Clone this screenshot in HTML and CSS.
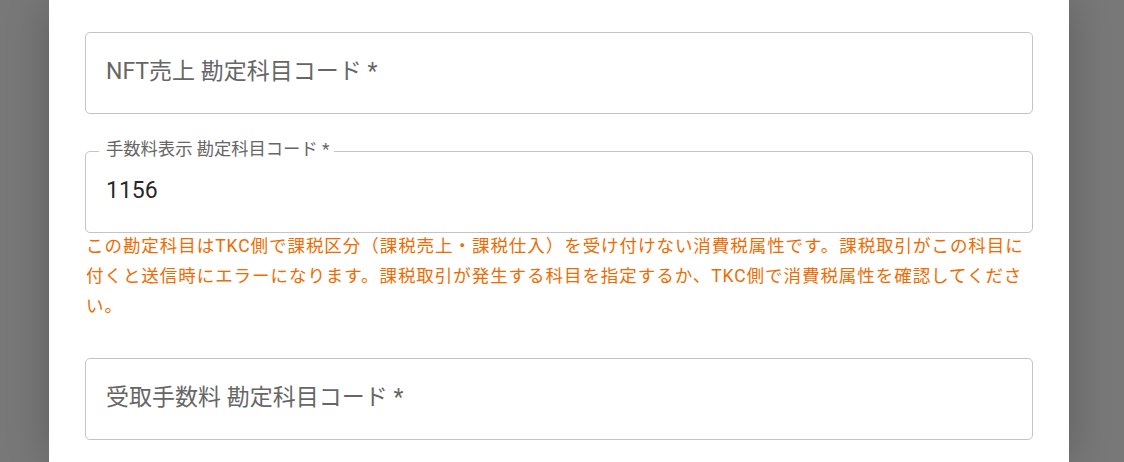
FILE: index.html
```html
<!DOCTYPE html>
<html lang="ja">
<head>
<meta charset="utf-8">
<link rel="stylesheet" href="styles.css">
</head>
<body>
<div class="dialog">
  <div class="field field-first">
    <span class="field-label">NFT売上 勘定科目コード *</span>
  </div>
  <div class="field field-filled">
    <span class="float-label">手数料表示 勘定科目コード *</span>
    <span class="field-value">1156</span>
  </div>
  <p class="helper">この勘定科目はTKC側で課税区分（課税売上・課税仕入）を受け付けない消費税属性です。課税取引がこの科目に付くと送信時にエラーになります。課税取引が発生する科目を指定するか、TKC側で消費税属性を確認してください。</p>
  <div class="field">
    <span class="field-label">受取手数料 勘定科目コード *</span>
  </div>
</div>
</body>
</html>
```
FILE: styles.css
```css
html, body {
  margin: 0;
  height: 462px;
  overflow: hidden;
}
body {
  background: #787878;
  font-family: Roboto, "Noto Sans CJK JP", sans-serif;
}
.dialog {
  margin-left: 49px;
  width: 1020px;
  height: 462px;
  box-sizing: border-box;
  background: #fff;
  padding: 32px 36px 0;
  box-shadow: 0 0 40px rgba(0, 0, 0, 0.22);
}
.field {
  position: relative;
  width: 948px;
  height: 82px;
  box-sizing: border-box;
  border: 1px solid #c4c4c4;
  border-radius: 5px;
  display: flex;
  align-items: center;
  padding: 0 20px 8px;
}
.field-filled {
  padding-bottom: 4px;
}
.field-first {
  margin-bottom: 37px;
}
.field-label {
  font-size: 23px;
  color: #666;
}
.field-value {
  font-size: 23px;
  color: rgba(0, 0, 0, 0.87);
}
.float-label {
  position: absolute;
  top: -15px;
  left: 13px;
  padding: 0 5px 0 7px;
  background: #fff;
  font-size: 17.3px;
  line-height: 24px;
  color: #666;
}
.helper {
  margin: -2px 0 0;
  padding-left: 1px;
  width: 948px;
  font-size: 17.5px;
  line-height: 30px;
  letter-spacing: 0.95px;
  color: #ed6c02;
}
.helper + .field {
  margin-top: 37px;
}
```
